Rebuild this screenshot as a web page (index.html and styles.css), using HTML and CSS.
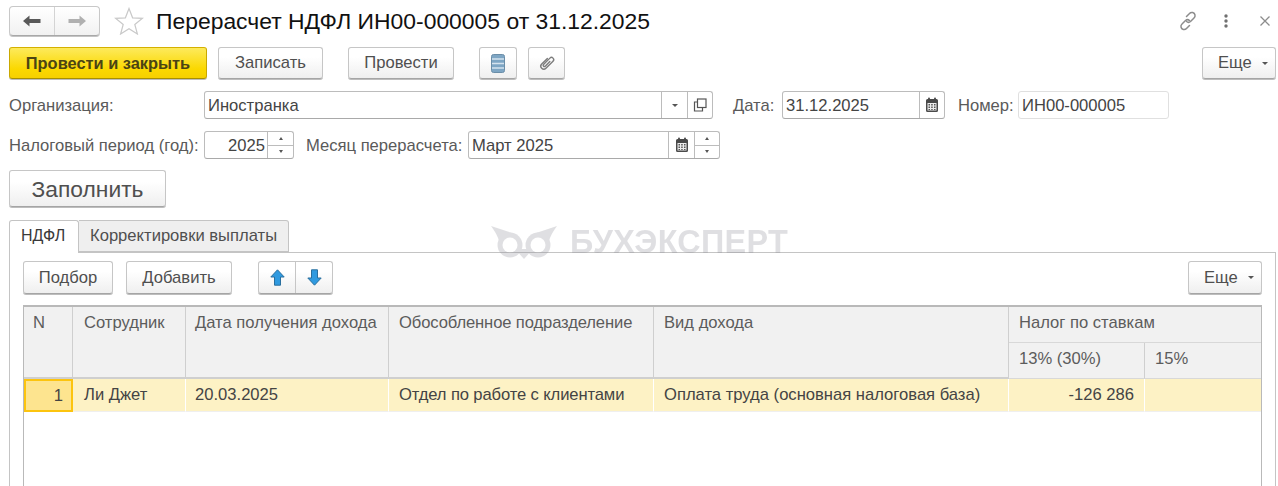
FILE: index.html
```html
<!DOCTYPE html>
<html lang="ru">
<head>
<meta charset="utf-8">
<title>Перерасчет НДФЛ</title>
<link rel="stylesheet" href="styles.css">
</head>
<body>
<svg class="defs" width="0" height="0">
  <symbol id="cal" viewBox="0 0 14 16"><path d="M1 3.5a1.5 1.5 0 0 1 1.5-1.500h9A1.500 1.500 0 0 1 13 3.500V13.500A1.500 1.500 0 0 1 11.500 15h-9A1.500 1.500 0 0 1 1 13.500z" fill="#4a4a4a"/><rect x="3" y=".5" width="2" height="3" rx="1" fill="#4a4a4a"/><rect x="9" y=".5" width="2" height="3" rx="1" fill="#4a4a4a"/><path d="M2.500 6h9v7.500h-9z" fill="#eee"/><path d="M3.500 7h1.500v1.500H3.500zM6.200 7h1.500v1.500H6.200zM9 7h1.500v1.500H9zM3.500 9.500h1.500V11H3.500zM6.200 9.500h1.500V11H6.200zM9 9.500h1.500V11H9zM3.500 12h1.500v1H3.500zM6.200 12h1.500v1H6.200zM9 12h1.500v1H9z" fill="#555"/></symbol>
</svg>

<div class="page">
  <header class="titlebar">
    <div class="nav">
      <button class="nav-btn"><svg width="18" height="12" viewBox="0 0 18 12"><path d="M0 6 6.500 .5V4H17.500V8H6.500V11.500z" fill="#595959"/></svg></button>
      <button class="nav-btn"><svg width="18" height="12" viewBox="0 0 18 12"><path d="M18 6 11.500 .5V4H.5V8H11.500V11.500z" fill="#b0b0b0"/></svg></button>
    </div>
    <svg class="star" width="30" height="28" viewBox="0 0 30 28"><path d="M15 1.500 18.600 10.800 28.500 11.300 20.800 17.500 23.400 27 15 21.700 6.600 27 9.200 17.500 1.500 11.300 11.400 10.800z" fill="#fff" stroke="#c9c9c9" stroke-width="1.200"/></svg>
    <h1 class="title">Перерасчет НДФЛ ИН00-000005 от 31.12.2025</h1>
    <div class="win-tools">
      <svg width="20" height="20" viewBox="0 0 20 20" fill="none" stroke="#8c8c8c" stroke-width="1.500" stroke-linecap="round"><path d="M8.500 5.500 11.500 2.500a3.200 3.200 0 0 1 5.500 1.500 3.200 3.200 0 0 1-1 3l-3.500 3.500a3 3 0 0 1-4 0"/><path d="M11.500 14.500 8.500 17.500a3.200 3.200 0 0 1-5.500-1.500 3.200 3.200 0 0 1 1-3l3.500-3.500a3 3 0 0 1 4 0"/></svg>
      <svg class="tool-dots" width="4" height="14" viewBox="0 0 4 14" fill="#707070"><circle cx="2" cy="2" r="1.700"/><circle cx="2" cy="7" r="1.700"/><circle cx="2" cy="12" r="1.700"/></svg>
      <svg class="tool-close" width="10" height="10" viewBox="0 0 10 10" stroke="#8c8c8c" stroke-width="1.300"><path d="M.5 .5l9 9M9.500 .5l-9 9"/></svg>
    </div>
  </header>

  <div class="cmdbar">
    <button class="btn btn-primary">Провести и закрыть</button>
    <button class="btn btn-write">Записать</button>
    <button class="btn btn-post">Провести</button>
    <button class="btn btn-icon btn-list"><svg width="14" height="19" viewBox="0 0 14 19"><rect x=".5" y=".5" width="13" height="18" rx="2" fill="#7ea6c4" stroke="#6b8ea8"/><path d="M1 5h12M1 9.500h12M1 14h12" stroke="#d5e3ee" stroke-width="1.300"/></svg></button>
    <button class="btn btn-icon btn-clip"><svg width="18" height="18" viewBox="0 0 18 18" fill="none" stroke="#7d7d7d" stroke-width="1.400" stroke-linecap="round"><path transform="rotate(45 9 9)" d="M6 5.500V13.500a3 3 0 0 0 6 0V3.500a2.200 2.200 0 0 0-4.400 0V12.500a1.200 1.200 0 0 0 2.400 0V6"/></svg></button>
    <button class="btn btn-more btn-more-top">Еще<span class="caret"></span></button>
  </div>

  <div class="form-row">
    <label class="lbl lbl-org">Организация:</label>
    <div class="field f-org"><span class="val">Иностранка</span><span class="seg seg-w"><span class="caret"></span></span><span class="seg seg-e"><svg width="14" height="14" viewBox="0 0 14 14" fill="none" stroke="#555" stroke-width="1.200"><rect x="4.500" y="1" width="8.500" height="8.500" fill="#fff"/><path d="M4.500 4H1.500V13H9.500V9.500"/></svg></span></div>
    <label class="lbl lbl-date">Дата:</label>
    <div class="field f-date"><span class="val">31.12.2025</span><span class="seg seg-e"><svg width="14" height="16"><use href="#cal"/></svg></span></div>
    <label class="lbl lbl-num">Номер:</label>
    <div class="field f-num"><span class="val">ИН00-000005</span></div>
  </div>

  <div class="form-row form-row-2">
    <label class="lbl lbl-year">Налоговый период (год):</label>
    <div class="field f-year"><span class="val val-right">2025</span><span class="spin"><span class="spin-up"></span><span class="spin-down"></span></span></div>
    <label class="lbl lbl-month">Месяц перерасчета:</label>
    <div class="field f-month"><span class="val">Март 2025</span><span class="seg seg-w"><svg width="14" height="16"><use href="#cal"/></svg></span><span class="spin spin-e"><span class="spin-up"></span><span class="spin-down"></span></span></div>
  </div>

  <button class="btn btn-fill">Заполнить</button>

  <div class="tabs">
    <div class="tab tab-active">НДФЛ</div>
    <div class="tab">Корректировки выплаты</div>
  </div>

  <section class="panel">
    <div class="tablebar">
      <button class="btn btn-pick">Подбор</button>
      <button class="btn btn-add">Добавить</button>
      <div class="arrows">
        <button class="arrow-btn"><svg width="15" height="17" viewBox="0 0 15 17"><path d="M7.500 .8 14.200 8H10.500V16.200H4.500V8H.8z" fill="#2f9ae0" stroke="#2a6f9e"/></svg></button>
        <button class="arrow-btn"><svg width="15" height="17" viewBox="0 0 15 17"><path d="M7.500 16.200 14.200 9H10.500V.8H4.500V9H.8z" fill="#2f9ae0" stroke="#2a6f9e"/></svg></button>
      </div>
      <button class="btn btn-more btn-more-table">Еще<span class="caret"></span></button>
    </div>

    <div class="grid">
      <div class="th th-tall col-n">N</div>
      <div class="th th-tall col-emp">Сотрудник</div>
      <div class="th th-tall col-date">Дата получения дохода</div>
      <div class="th th-tall col-sub">Обособленное подразделение</div>
      <div class="th th-tall">Вид дохода</div>
      <div class="th th-group">Налог по ставкам</div>
      <div class="th">13% (30%)</div>
      <div class="th th-last">15%</div>
      <div class="td td-current">1</div>
      <div class="td col-emp">Ли Джет</div>
      <div class="td col-date">20.03.2025</div>
      <div class="td col-sub">Отдел по работе с клиентами</div>
      <div class="td">Оплата труда (основная налоговая база)</div>
      <div class="td td-num">-126 286</div>
      <div class="td td-last"></div>
    </div>
  </section>

  <div class="watermark" aria-label="БУХЭКСПЕРТ">
    <svg width="68" height="34" viewBox="0 0 68 34">
      <mask id="owl-eyes"><rect width="68" height="34" fill="#fff"/><circle cx="20" cy="20" r="7.500" fill="#000"/><circle cx="48" cy="20" r="7.500" fill="#000"/></mask>
      <g mask="url(#owl-eyes)" fill="#8c8c96"><path d="M1 1 25 9 10 21C9 13 6 8 1 1ZM67 1 43 9 58 21C59 13 62 8 67 1ZM25 24H43L34 34Z"/><circle cx="20" cy="20" r="12.500"/><circle cx="48" cy="20" r="12.500"/></g>
    </svg>
    <span class="wm-text">БУХЭКСПЕРТ</span>
  </div>
</div>
</body>
</html>
```
FILE: styles.css
```css
* { box-sizing: border-box; }
html, body { margin: 0; padding: 0; background: #fff; }
body { font: 16.6px/20px "Liberation Sans", Arial, sans-serif; color: #4a4a4a; }
.defs { position: absolute; }
button { font: inherit; color: inherit; padding: 0; }

.page {
  position: relative;
  width: 1278px;
  height: 486px;
  overflow: hidden;
  padding: 0 2px 0 9px;
  display: flex;
  flex-direction: column;
}

/* Title bar */
.titlebar { display: flex; align-items: center; height: 47px; padding-bottom: 5px; }
.nav {
  display: flex;
  width: 91px;
  height: 30px;
  border: 1px solid #c8c8c8;
  border-bottom-color: #a8a8a8;
  border-radius: 4px;
  background: linear-gradient(#fff, #f1f1f1);
  box-shadow: 0 1px 0 #c4c4c4;
}
.nav-btn { flex: 1; border: 0; background: none; display: flex; align-items: center; justify-content: center; }
.nav-btn + .nav-btn { border-left: 1px solid #d4d4d4; }
.star { margin-left: 14px; }
.title { margin: 0 0 0 12px; font-size: 22.9px; line-height: 30px; font-weight: 400; color: #111; }
.win-tools { margin-left: auto; display: flex; align-items: center; padding-right: 6px; }
.tool-dots { margin-left: 26px; }
.tool-close { margin-left: 32px; }

/* Buttons */
.btn {
  height: 32px;
  border: 1px solid #c6c6c6;
  border-bottom-color: #a5a5a5;
  border-radius: 3px;
  background: linear-gradient(#fff 30%, #efefef);
  box-shadow: 0 1px 0 #bdbdbd;
  color: #4f4f4f;
  display: flex;
  align-items: center;
  justify-content: center;
  white-space: nowrap;
}
.cmdbar { display: flex; align-items: center; height: 32px; }
.btn-primary {
  width: 198px;
  font-weight: 700;
  font-size: 16.4px;
  color: #4b4413;
  border-color: #d4b000 #c9a800 #a88f00;
  background: linear-gradient(#fdea5c, #fbd800 70%, #f6d000);
}
.btn-write { width: 105px; margin-left: 11px; }
.btn-post { width: 106px; margin-left: 25px; }
.btn-icon { width: 38px; }
.btn-list { margin-left: 25px; }
.btn-clip { margin-left: 11px; width: 37px; }
.btn-more { width: 74px; justify-content: flex-start; padding-left: 15px; }
.btn-more-top { margin-left: auto; }
.btn-more .caret { margin-left: 10px; }
.caret { display: inline-block; width: 0; height: 0; border: 3.500px solid transparent; border-top: 3.500px solid #555; border-bottom: 0; }

/* Form */
.form-row { display: flex; align-items: center; height: 28px; margin-top: 12px; color: #5a5a5a; }
.form-row-2 { margin-top: 12px; }
.lbl { white-space: nowrap; padding-top: 1px; }
.lbl-org { width: 195px; }
.lbl-date { margin-left: 20px; width: 49px; }
.lbl-num { margin-left: 13px; width: 60px; }
.lbl-year { width: 195px; }
.lbl-month { margin-left: 12px; width: 162px; }
.field {
  height: 28px;
  display: flex;
  align-items: stretch;
  border: 1px solid #bcbcbc;
  border-bottom-color: #a9a9a9;
  border-radius: 3px;
  background: #fff;
  color: #444;
}
.val { flex: 1; padding: 1px 3px 0; line-height: 26px; white-space: nowrap; }
.val-right { text-align: right; padding-right: 2px; }
.seg { border-left: 1px solid #bcbcbc; display: flex; align-items: center; justify-content: center; }
.seg-w { width: 26px; }
.seg-e { width: 25px; }
.f-org { width: 509px; }
.f-date { width: 163px; }
.f-num { width: 151px; border-color: #e0e0e0; }
.f-year { width: 90px; }
.f-month { width: 252px; }
.spin { width: 26px; border-left: 1px solid #bcbcbc; display: flex; flex-direction: column; }
.spin-e { width: 25px; }
.spin-up, .spin-down { flex: 1; display: flex; align-items: center; justify-content: center; }
.spin-up { border-bottom: 1px solid #bcbcbc; }
.spin-up::before { content: ""; border: 2.500px solid transparent; border-bottom: 3px solid #555; border-top: 0; }
.spin-down::before { content: ""; border: 2.500px solid transparent; border-top: 3px solid #555; border-bottom: 0; }

.btn-fill { width: 157px; height: 37px; margin-top: 11px; font-size: 22.8px; flex: none; }

/* Tabs */
.tabs { display: flex; margin-top: 13px; height: 32px; flex: none; }
.tab {
  padding: 0 11px;
  height: 32px;
  line-height: 30px;
  border: 1px solid #c4c4c4;
  border-left: 0;
  border-radius: 0 3px 0 0;
  background: #efefef;
  color: #4f4f4f;
  white-space: nowrap;
}
.tab-active {
  width: 70px;
  height: 33px;
  position: relative;
  z-index: 1;
  font-size: 16px;
  border-left: 1px solid #c4c4c4;
  border-bottom: 0;
  border-radius: 3px 3px 0 0;
  background: #fff;
  color: #3a3a3a;
}

.panel {
  flex: 1;
  border: 1px solid #c4c4c4;
  border-bottom: 0;
  padding: 8px 13px 0;
  display: flex;
  flex-direction: column;
  min-height: 0;
}
.tablebar { display: flex; height: 33px; flex: none; }
.btn-pick { width: 90px; height: 33px; }
.btn-add { width: 106px; height: 33px; margin-left: 13px; }
.arrows {
  margin-left: 26px;
  width: 75px;
  height: 33px;
  display: flex;
  border: 1px solid #c6c6c6;
  border-bottom-color: #a5a5a5;
  border-radius: 3px;
  background: linear-gradient(#fff 30%, #efefef);
  box-shadow: 0 1px 0 #bdbdbd;
}
.arrow-btn { flex: 1; border: 0; background: none; display: flex; align-items: center; justify-content: center; }
.arrow-btn + .arrow-btn { border-left: 1px solid #c6c6c6; }
.btn-more-table { margin-left: auto; height: 33px; }

/* Table */
.grid {
  flex: 1;
  margin-top: 11px;
  border: 1px solid #b9b9b9;
  border-top-width: 2px;
  border-bottom: 0;
  display: grid;
  grid-template-columns: 49px 113px 203px 265px 355px 136px 1fr;
  grid-template-rows: 36px 36px 33px 1fr;
}
.th {
  background: #f1f1f1;
  color: #5c5c5c;
  padding: 6px 10px 0;
  border-right: 1px solid #cfcfcf;
  border-bottom: 1px solid #d8d8d8;
  white-space: nowrap;
}
.th-tall { grid-row: span 2; border-bottom: 2px solid #cfcfcf; }
.th-group { grid-column: span 2; border-right: 0; }
.th-last { border-right: 0; }
.col-n { padding-left: 9px; }
.col-sub { letter-spacing: -.12px; }
.td {
  background: #fdf2c5;
  color: #444;
  padding: 6px 10px 0;
  border-right: 1px solid #fff;
  border-bottom: 1px solid #efefef;
  white-space: nowrap;
}
.th.col-emp, .td.col-emp { padding-left: 11px; }
.th.col-date, .td.col-date { padding-left: 9px; }
.td-current {
  background: #fde48f;
  border: 2px solid #fcc40f;
  text-align: right;
  padding: 5px 8px 0 0;
}
.td-num { text-align: right; }
.td-last { border-right: 0; }

/* Watermark overlay */
.watermark {
  position: absolute;
  left: 490px;
  top: 225px;
  display: flex;
  align-items: center;
  gap: 12px;
  pointer-events: none;
  opacity: .27;
}
.wm-text { font-size: 32.4px; line-height: 34px; font-weight: 700; color: #8c8c96; letter-spacing: .3px; }
```
